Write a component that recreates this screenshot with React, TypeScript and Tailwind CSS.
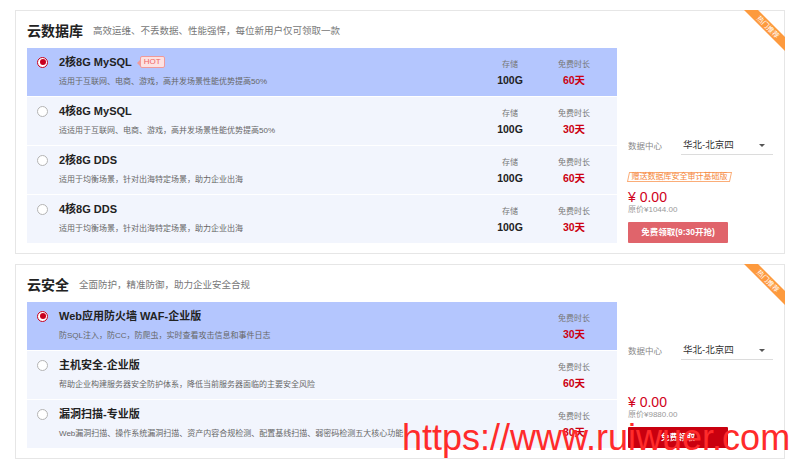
import React from "react";

type RowData = {
  title: string;
  desc: string;
  hot?: boolean;
  storage?: string;
  days: string;
  selected?: boolean;
};

const dbRows: RowData[] = [
  { title: "2核8G MySQL", hot: true, desc: "适用于互联网、电商、游戏，高并发场景性能优势提高50%", storage: "100G", days: "60天", selected: true },
  { title: "4核8G MySQL", desc: "适适用于互联网、电商、游戏，高并发场景性能优势提高50%", storage: "100G", days: "30天" },
  { title: "2核8G DDS", desc: "适用于均衡场景，针对出海特定场景，助力企业出海", storage: "100G", days: "60天" },
  { title: "4核8G DDS", desc: "适用于均衡场景，针对出海特定场景，助力企业出海", storage: "100G", days: "30天" },
];

const secRows: RowData[] = [
  { title: "Web应用防火墙 WAF-企业版", desc: "防SQL注入，防CC，防爬虫，实时查看攻击信息和事件日志", days: "30天", selected: true },
  { title: "主机安全-企业版", desc: "帮助企业构建服务器安全防护体系，降低当前服务器面临的主要安全风险", days: "60天" },
  { title: "漏洞扫描-专业版", desc: "Web漏洞扫描、操作系统漏洞扫描、资产内容合规检测、配置基线扫描、弱密码检测五大核心功能", days: "30天" },
];

function Radio({ on }: { on?: boolean }) {
  return on ? (
    <span className="w-[11px] h-[11px] rounded-full border-[1.5px] border-[#c8001e] bg-white flex items-center justify-center shrink-0">
      <span className="w-[6px] h-[6px] rounded-full bg-[#c8001e]" />
    </span>
  ) : (
    <span className="w-[11px] h-[11px] rounded-full border border-[#b4b4b4] bg-white shrink-0" />
  );
}

function Row({ r }: { r: RowData }) {
  return (
    <div className={`h-[48px] flex items-start pl-[10px] pr-[13px] ${r.selected ? "bg-[#b4c6fe]" : "bg-[#f2f5fd]"}`}>
      <div className="flex-1 min-w-0 flex flex-col pt-[8px]">
        <div className="flex items-center h-[12px]">
          <Radio on={r.selected} />
          <span className="ml-[11px] text-[11px] leading-[12px] font-bold text-[#222] whitespace-nowrap">{r.title}</span>
          {r.hot && (
            <span className="relative ml-[8px] h-[12px] px-[3px] flex items-center border border-[#f09a9a] bg-[#fde2e2] text-[#ee6464] text-[8px] leading-none rounded-[2px]">
              <span className="absolute left-[-4px] top-[3px] w-0 h-0 border-y-[3px] border-y-transparent border-r-[3px] border-r-[#f09a9a]" />
              HOT
            </span>
          )}
        </div>
        <div className="mt-[9px] ml-[22px] text-[8px] leading-[10px] text-[#666] whitespace-nowrap">{r.desc}</div>
      </div>
      {r.storage && (
        <div className="w-[60px] flex flex-col items-center pt-[12px]">
          <span className="text-[8px] leading-[10px] text-[#777]">存储</span>
          <span className="mt-[3px] text-[10.5px] leading-[14px] font-bold text-[#222]">{r.storage}</span>
        </div>
      )}
      <div className="w-[60px] ml-[4px] flex flex-col items-center pt-[12px]">
        <span className="text-[8px] leading-[10px] text-[#777]">免费时长</span>
        <span className="mt-[3px] text-[10.5px] leading-[14px] font-bold text-[#cc0011]">{r.days}</span>
      </div>
    </div>
  );
}

function Ribbon() {
  return (
    <div className="absolute top-[-1px] right-[-1px] w-[42px] h-[42px] overflow-hidden">
      <svg width="42" height="42" viewBox="0 0 42 42" className="absolute inset-0">
        <polygon points="1,0 15,0 42,27 42,41" fill="#fd9a3e" />
      </svg>
      <span className="absolute left-[25px] top-[17px] -translate-x-1/2 -translate-y-1/2 rotate-45 text-[7px] leading-none text-white whitespace-nowrap">
        热门推荐
      </span>
    </div>
  );
}

function Panel({ badge, price, btn, btnColor }: { badge: boolean; price: string; btn: string; btnColor: string }) {
  return (
    <div className="flex-1 flex flex-col justify-end">
      <div className="flex items-center">
        <span className="w-[53px] text-[8.5px] text-[#888] leading-[18px]">数据中心</span>
        <div className="flex-1 h-[19px] border-b border-[#dcdcdc] flex items-center justify-between pl-[2px] pr-[8px]">
          <span className="text-[9.5px] text-[#333]">华北-北京四</span>
          <span className="w-0 h-0 border-x-[3px] border-x-transparent border-t-[3px] border-t-[#555]" />
        </div>
      </div>
      <div className="mt-[17px] h-[10px] flex">
        {badge && (
          <span className="relative h-[10px] w-[103px] flex items-center justify-center">
            <span className="absolute inset-0 border border-[#fbad78] -skew-x-12" />
            <span className="relative text-[8px] leading-none text-[#f5873a] whitespace-nowrap">赠送数据库安全审计基础版</span>
          </span>
        )}
      </div>
      <div className="mt-[7px] text-[14px] leading-[16px] text-[#d0021b]">¥ 0.00</div>
      <div className="text-[8px] leading-[10px] text-[#999]">{price}</div>
      <div className={`mt-[7px] w-[100px] h-[21px] flex items-center justify-center text-white text-[8.5px] font-bold rounded-[1px] ${btnColor}`}>
        {btn}
      </div>
    </div>
  );
}

function Card({ title, sub, rows, badge, price, btn, btnColor }: { title: string; sub: string; rows: RowData[]; badge: boolean; price: string; btn: string; btnColor: string }) {
  return (
    <div className="relative w-[770px] border border-[#e6e6e6] bg-white px-[11px] pt-[10px] pb-[10px]">
      <Ribbon />
      <div className="h-[20px] flex items-center">
        <span className="text-[14px] font-bold text-[#222] leading-none">{title}</span>
        <span className="ml-[10px] text-[9.5px] text-[#777] leading-none">{sub}</span>
      </div>
      <div className="mt-[7px] flex gap-[11px]">
        <div className="w-[590px] flex flex-col gap-px">
          {rows.map((r, i) => (
            <Row key={i} r={r} />
          ))}
        </div>
        <Panel badge={badge} price={price} btn={btn} btnColor={btnColor} />
      </div>
    </div>
  );
}

export default function App() {
  return (
    <div
      className="relative w-[800px] h-[465px] overflow-hidden bg-white pl-[15px] pt-[10px] flex flex-col gap-[10px]"
      style={{ fontFamily: '"Liberation Sans", "Noto Sans CJK SC", sans-serif' }}
    >
      <Card
        title="云数据库"
        sub="高效运维、不丢数据、性能强悍，每位新用户仅可领取一款"
        rows={dbRows}
        badge={true}
        price="原价¥1044.00"
        btn="免费领取(9:30开抢)"
        btnColor="bg-[#e0646b]"
      />
      <Card
        title="云安全"
        sub="全面防护，精准防御，助力企业安全合规"
        rows={secRows}
        badge={false}
        price="原价¥9880.00"
        btn="免费领取"
        btnColor="bg-[#c9000f]"
      />
      <div className="absolute left-[402px] top-[420px] text-[36px] leading-[36px] text-[#ff2b2b] whitespace-nowrap pointer-events-none">
        https://www.ruiwuer.com
      </div>
    </div>
  );
}
